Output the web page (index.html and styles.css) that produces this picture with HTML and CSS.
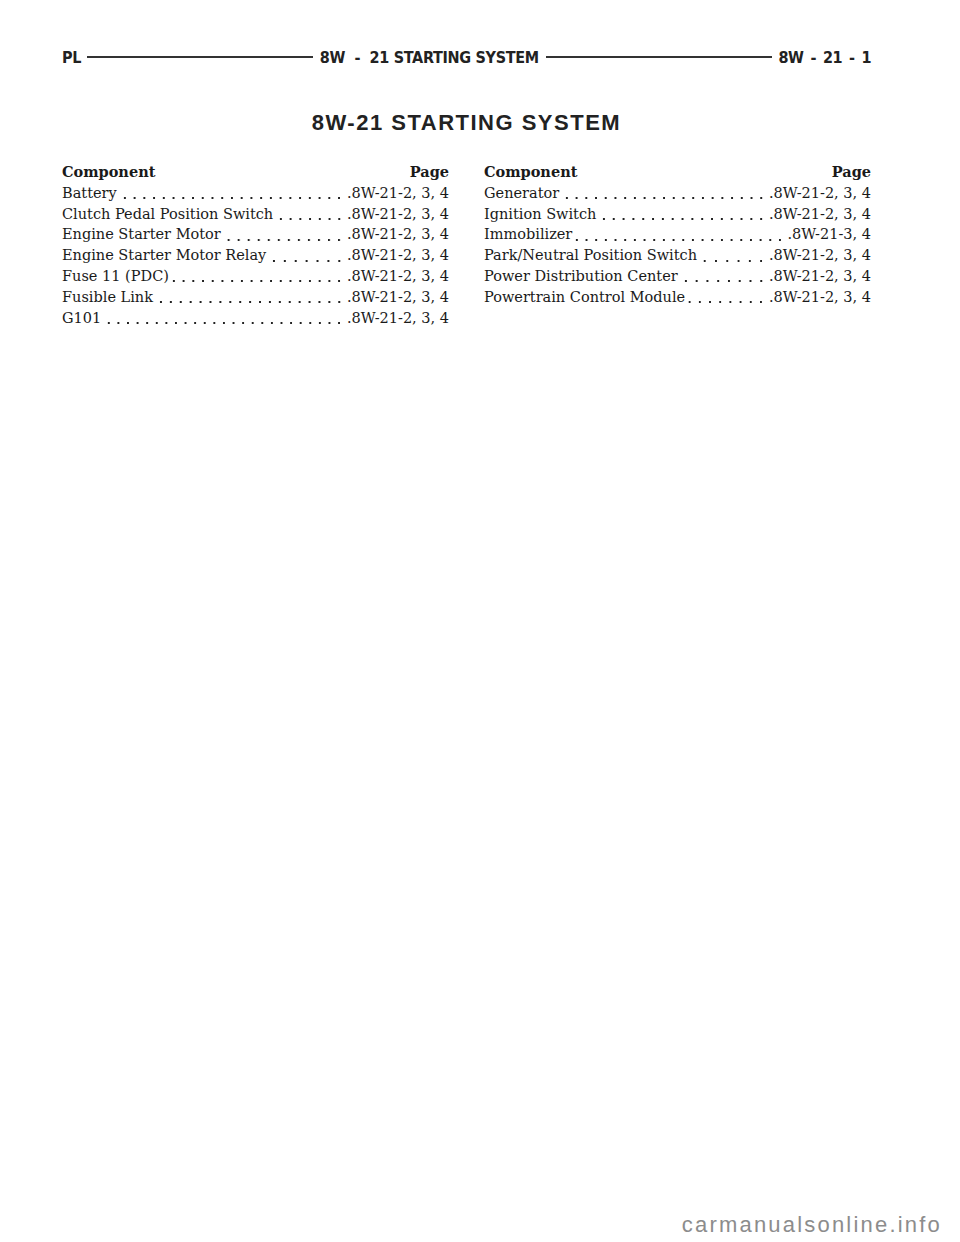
FILE: index.html
```html
<!DOCTYPE html>
<html>
  <head>
    <meta charset="UTF-8">
    <title>8W-21 Starting System</title>
    <link rel="stylesheet" href="styles.css">
  </head>
  <body>
    <div id="page">
      <div id="header">
        <span class="tag">PL</span>
        <span class="rule"></span>
        <span class="section">8W&nbsp; - &nbsp;21 STARTING SYSTEM</span>
        <span class="rule"></span>
        <span class="folio">8W&nbsp; - &nbsp;21&nbsp; - &nbsp;1</span>
      </div>

      <h1>8W-21 STARTING SYSTEM</h1>

      <div id="index">
        <div class="col">
          <div class="row head"><span class="name">Component</span><span class="page">Page</span></div>
          <div class="row"><span class="name">Battery</span><span class="dots"></span><span class="page">.8W-21-2, 3, 4</span></div>
          <div class="row"><span class="name">Clutch Pedal Position Switch</span><span class="dots"></span><span class="page">.8W-21-2, 3, 4</span></div>
          <div class="row"><span class="name">Engine Starter Motor</span><span class="dots"></span><span class="page">.8W-21-2, 3, 4</span></div>
          <div class="row"><span class="name">Engine Starter Motor Relay</span><span class="dots"></span><span class="page">.8W-21-2, 3, 4</span></div>
          <div class="row"><span class="name">Fuse 11 (PDC)</span><span class="dots tight"></span><span class="page">.8W-21-2, 3, 4</span></div>
          <div class="row"><span class="name">Fusible Link</span><span class="dots"></span><span class="page">.8W-21-2, 3, 4</span></div>
          <div class="row"><span class="name">G101</span><span class="dots"></span><span class="page">.8W-21-2, 3, 4</span></div>
        </div>
        <div class="col">
          <div class="row head"><span class="name">Component</span><span class="page">Page</span></div>
          <div class="row"><span class="name">Generator</span><span class="dots"></span><span class="page">.8W-21-2, 3, 4</span></div>
          <div class="row"><span class="name">Ignition Switch</span><span class="dots"></span><span class="page">.8W-21-2, 3, 4</span></div>
          <div class="row"><span class="name">Immobilizer</span><span class="dots tight"></span><span class="page">.8W-21-3, 4</span></div>
          <div class="row"><span class="name">Park/Neutral Position Switch</span><span class="dots"></span><span class="page">.8W-21-2, 3, 4</span></div>
          <div class="row"><span class="name">Power Distribution Center</span><span class="dots"></span><span class="page">.8W-21-2, 3, 4</span></div>
          <div class="row"><span class="name">Powertrain Control Module</span><span class="dots tight"></span><span class="page">.8W-21-2, 3, 4</span></div>
        </div>
      </div>
    </div>

    <p id="mark">carmanualsonline.info</p>
  </body>
</html>
```

FILE: styles.css
```css
body {
  margin: 0;
  background-color: #fff;
  color: #1a1a1a;
  width: 960px;
  height: 1242px;
  overflow: hidden;
  position: relative;
}
#page {
  padding: 48px 89px 0 62px;
}
#header {
  display: flex;
  align-items: center;
  height: 18px;
  font-family: 'DejaVu Sans Condensed', 'Liberation Sans', sans-serif;
  font-weight: bold;
  font-size: 16px;
  letter-spacing: -0.3px;
  color: #222;
  white-space: nowrap;
}
#header .rule {
  flex: 1;
  height: 2px;
  background-color: #333;
  margin: 0 7px;
}
#header .tag {
  margin-right: -1px;
}
#header .folio {
  word-spacing: -1px;
  letter-spacing: -0.5px;
}
h1 {
  margin: 44px 0 0 0;
  font-family: 'Liberation Sans', Arial, sans-serif;
  font-size: 22px;
  line-height: 26px;
  letter-spacing: 1.5px;
  font-weight: bold;
  text-align: center;
  color: #222;
}
#index {
  display: grid;
  grid-template-columns: minmax(0, 1fr) minmax(0, 1fr);
  column-gap: 35px;
  margin-top: 26px;
  font-family: 'DejaVu Serif', 'Liberation Serif', serif;
  font-size: 14.5px;
  line-height: 20.8px;
}
.row {
  display: flex;
  white-space: nowrap;
}
.row.head {
  justify-content: space-between;
  font-weight: bold;
}
/* dot leader: whole dots only, spread to fill the gap up to the page ref */
.row .dots {
  flex: 1;
  min-width: 0;
  margin: 0 2.5px 0 3px;
  background-image: radial-gradient(circle, #222 0.9px, transparent 1.3px);
  background-size: 9.6px 4px;
  background-position: right top 13.5px;
  background-repeat: space no-repeat;
}
.row .dots.tight {
  margin-left: 0;
}
#mark {
  position: absolute;
  right: 18px;
  bottom: 4px;
  margin: 0;
  font-family: 'Liberation Sans', Arial, sans-serif;
  font-size: 22px;
  letter-spacing: 2.2px;
  color: #8c8c8c;
}
```
